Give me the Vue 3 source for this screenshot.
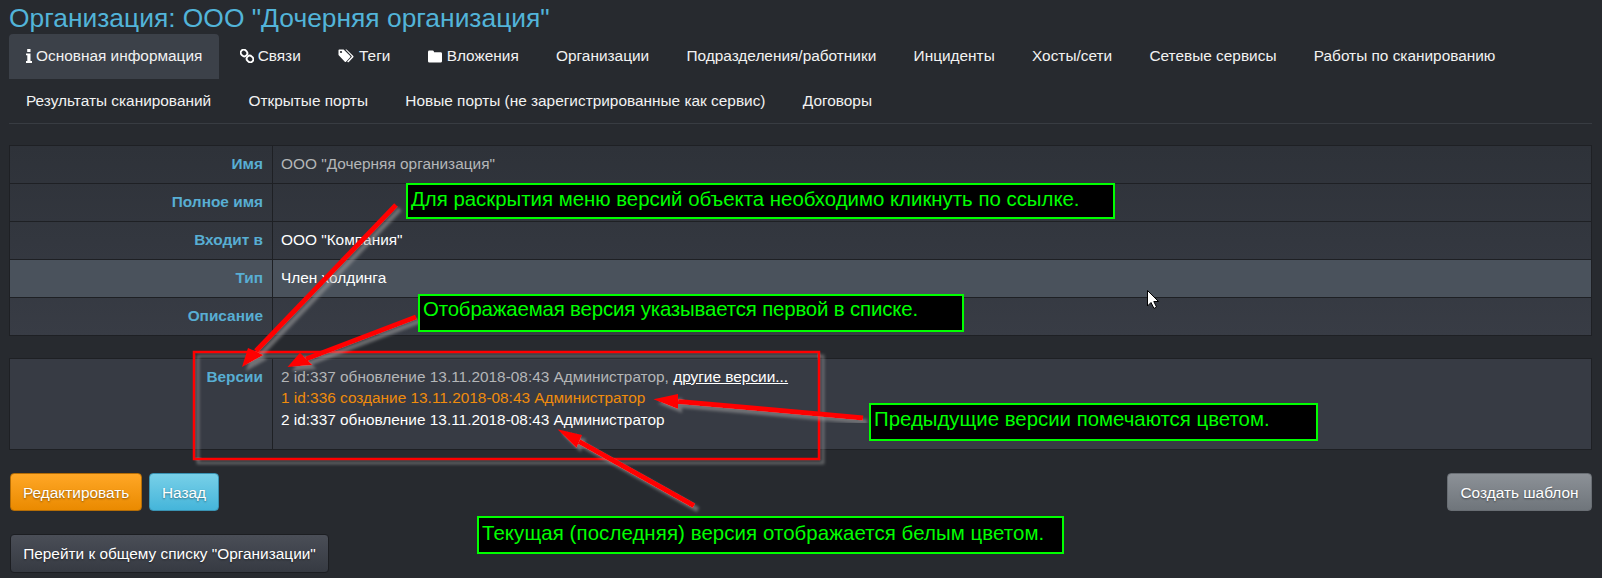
<template>
  <div class="page">
    <h3 class="title">Организация: ООО "Дочерняя организация"</h3>

    <ul class="tabs">
      <li v-for="tab in tabs" :key="tab.name" class="tab" :class="{ active: tab.active }">
        <svg v-if="tab.icon === 'info'" class="icon" width="6" height="14" viewBox="0 0 6 14">
          <path d="M1.2 0h3.3v2.9H1.2zM0 4.4h4.5v7.7H6V14H0v-1.9h1.3V6.3H0z" fill="#fff" />
        </svg>
        <svg v-if="tab.icon === 'link'" class="icon" width="14" height="14" viewBox="0 0 14 14">
          <g fill="none" stroke="#fff" stroke-width="1.9">
            <rect x="0.6" y="1" width="6.8" height="6" rx="3" transform="rotate(45 4 4)" />
            <rect x="6.6" y="7" width="6.8" height="6" rx="3" transform="rotate(45 10 10)" />
          </g>
        </svg>
        <svg v-if="tab.icon === 'tags'" class="icon" width="17" height="14" viewBox="0 0 16 14" preserveAspectRatio="xMinYMid meet">
          <path d="M0.5 1.3Q0.5 0.5 1.3 0.5H5.6L12.2 7.1Q12.8 7.7 12.2 8.3L8 12.7Q7.4 13.2 6.8 12.7L0.5 6Z" fill="#fff" />
          <circle cx="3" cy="3" r="1.1" fill="#272a2f" />
          <path d="M7.4 0.5H8.6L15.3 7.1Q15.8 7.7 15.3 8.3L10.8 13Q10.2 13.5 9.6 13L9.2 12.6L13.6 7.9Q14 7.4 13.6 7Z" fill="#fff" />
        </svg>
        <svg v-if="tab.icon === 'folder'" class="icon" width="15" height="13" viewBox="0 0 14 13" preserveAspectRatio="xMinYMid meet">
          <path d="M1.4 0.5H4.6Q5.6 0.5 5.9 1.4L6.1 2.2H12.6Q14 2.2 14 3.6V11.2Q14 12.6 12.6 12.6H1.4Q0 12.6 0 11.2V1.9Q0 0.5 1.4 0.5Z" fill="#fff" />
        </svg>
        {{ tab.name }}
      </li>
    </ul>

    <div class="panel panel-info">
      <div v-for="row in rows" :key="row.label" class="row" :class="{ hover: row.hover }">
        <div class="label">{{ row.label }}</div>
        <div class="value" :class="{ muted: row.muted }">{{ row.value }}</div>
      </div>
    </div>

    <div class="panel panel-versions">
      <div class="row row-versions">
        <div class="label">Версии</div>
        <div class="value">
          <div class="muted">2 id:337 обновление 13.11.2018-08:43 Администратор, <a class="more">другие версии...</a></div>
          <div class="old">1 id:336 создание 13.11.2018-08:43 Администратор</div>
          <div>2 id:337 обновление 13.11.2018-08:43 Администратор</div>
        </div>
      </div>
    </div>

    <div class="actions">
      <div class="actions-left">
        <button class="btn btn-orange">Редактировать</button>
        <button class="btn btn-blue">Назад</button>
      </div>
      <button class="btn btn-grey">Создать шаблон</button>
    </div>
    <button class="btn btn-dark">Перейти к общему списку "Организации"</button>

    <!-- поверх страницы: красная рамка, стрелки, подписи -->
    <svg class="overlay" width="1602" height="578" viewBox="0 0 1602 578">
      <defs>
        <filter id="shade" x="-10%" y="-10%" width="130%" height="130%">
          <feDropShadow dx="4" dy="4" stdDeviation="1.6" flood-color="#a0a0a0" flood-opacity="0.55" />
        </filter>
      </defs>
      <g filter="url(#shade)">
        <rect x="194" y="352" width="625" height="107" fill="none" stroke="#f00" stroke-width="2.5" />
      </g>
      <g v-for="(a, i) in arrows" :key="i" filter="url(#shade)">
        <line :x1="a.from[0]" :y1="a.from[1]" :x2="a.neck[0]" :y2="a.neck[1]" stroke="#f00" stroke-width="5" />
        <polygon :points="a.head" fill="#f00" />
      </g>
      <path d="M1147.5 290.5V306L1151 302.5L1154 308.5L1156.5 307L1153.8 301.5H1158.5Z" fill="#fff" stroke="#000" stroke-width="1" />
    </svg>

    <div
      v-for="note in notes"
      :key="note.text"
      class="note"
      :style="{ left: note.x + 'px', top: note.y + 'px', width: note.w + 'px', height: note.h + 'px', letterSpacing: note.ls + 'px', paddingTop: note.pad + 'px' }"
    >
      {{ note.text }}
    </div>
  </div>
</template>

<script setup>
const tabs = [
  { name: 'Основная информация', icon: 'info', active: true },
  { name: 'Связи', icon: 'link' },
  { name: 'Теги', icon: 'tags' },
  { name: 'Вложения', icon: 'folder' },
  { name: 'Организации' },
  { name: 'Подразделения/работники' },
  { name: 'Инциденты' },
  { name: 'Хосты/сети' },
  { name: 'Сетевые сервисы' },
  { name: 'Работы по сканированию' },
  { name: 'Результаты сканирований' },
  { name: 'Открытые порты' },
  { name: 'Новые порты (не зарегистрированные как сервис)' },
  { name: 'Договоры' },
];

const rows = [
  { label: 'Имя', value: 'ООО "Дочерняя организация"', muted: true },
  { label: 'Полное имя', value: '' },
  { label: 'Входит в', value: 'ООО "Компания"' },
  { label: 'Тип', value: 'Член холдинга', hover: true },
  { label: 'Описание', value: '' },
];

const arrows = [
  { from: [396, 205], neck: [256, 351], head: '242,367 248,348 263.5,355' },
  { from: [416, 317], neck: [306, 359], head: '287.5,367 300,352.7 312.5,365' },
  { from: [863, 418], neck: [678, 401.5], head: '653.5,399.3 678,394 678,409' },
  { from: [694, 505.7], neck: [579, 441.5], head: '557.5,429.3 582,435 576.5,448' },
];

// ширина текста в подписях чуть разная, подгонка через letter-spacing
const notes = [
  { text: 'Для раскрытия меню версий объекта необходимо кликнуть по ссылке.', x: 406, y: 183, w: 709, h: 36, ls: 0, pad: 1 },
  { text: 'Отображаемая версия указывается первой в списке.', x: 418, y: 294, w: 546, h: 38, ls: -0.15, pad: 0 },
  { text: 'Предыдущие версии помечаются цветом.', x: 869, y: 403, w: 449, h: 38, ls: 0, pad: 1 },
  { text: 'Текущая (последняя) версия отображается белым цветом.', x: 477, y: 516, w: 587, h: 38, ls: 0.1, pad: 2 },
];
</script>

<style>
body {
  background: #272a2f;
}
</style>

<style scoped>
.page {
  position: relative;
  box-sizing: border-box;
  width: 1602px;
  height: 578px;
  padding: 0 10px 0 9px;
  overflow: hidden;
  background: #272a2f;
  font-family: 'Liberation Sans', Arial, sans-serif;
  font-size: 15.4px;
  color: #fff;
}

.title {
  margin: 0;
  height: 34px;
  line-height: 36px;
  font-size: 26.4px;
  font-weight: 400;
  color: #52b4d9;
}

.tabs {
  display: flex;
  flex-wrap: wrap;
  margin: 0;
  padding: 0;
  list-style: none;
  border-bottom: 1px solid #383c42;
}

.tab {
  display: flex;
  align-items: center;
  gap: 4px;
  height: 44.5px;
  padding: 0 17px;
  margin-right: 3.3px;
  white-space: nowrap;
  color: #f2f2f2;
}

.tab.active {
  background: #3c4149;
  border-radius: 4px 4px 0 0;
}

.panel {
  border: 1px solid #1e2024;
  border-bottom: 0;
}

.panel-info {
  margin-top: 21px;
  background: linear-gradient(#2e3239, #383c45);
}

.panel-versions {
  margin-top: 22px;
  background: #373b44;
}

.row {
  display: flex;
  height: 38px;
  box-sizing: border-box;
  border-bottom: 1px solid #1e2024;
}

.row.hover {
  background: #4a525c;
}

.row-versions {
  height: 91px;
}

.label {
  box-sizing: border-box;
  width: 263px;
  padding: 0 9px 0 10px;
  line-height: 36px;
  text-align: right;
  font-weight: 700;
  color: #58aed3;
  border-right: 1px solid #1e2024;
}

.value {
  flex: 1;
  padding: 0 8px;
  line-height: 36px;
}

.row-versions .value {
  padding-top: 7px;
  line-height: 21.4px;
}

.row-versions .label {
  padding-top: 7px;
  line-height: 21.4px;
}

.muted {
  color: #b4b6b8;
}

.old {
  color: #f08c0c;
}

.more {
  color: #fff;
  text-decoration: underline;
}

.actions {
  display: flex;
  justify-content: space-between;
  margin-top: 23px;
}

.actions-left {
  display: flex;
  gap: 7px;
  margin-left: 1px;
}

.btn {
  box-sizing: border-box;
  height: 38px;
  padding: 1px 12px 0;
  font-family: inherit;
  font-size: 15.4px;
  white-space: nowrap;
  color: #fff;
  border: 1px solid transparent;
  border-radius: 4px;
  text-shadow: 0 1px 2px rgba(0, 0, 0, 0.45);
}

.btn-orange {
  width: 132px;
  background: linear-gradient(#ffa726, #ea8a00);
  border-color: #b56d06;
}

.btn-blue {
  width: 70px;
  background: linear-gradient(#78d0e8, #45b5da);
  border-color: #3a93b3;
}

.btn-grey {
  width: 145px;
  background: linear-gradient(#8c9197, #6f757b);
  border-color: #696e74;
}

.btn-dark {
  display: block;
  width: 319px;
  height: 39px;
  margin: 23px 0 0 1px;
  padding-top: 0;
  background: linear-gradient(#4a4e57, #363a42);
  border-color: #1c1e22;
}

.overlay {
  position: absolute;
  top: 0;
  left: 0;
  pointer-events: none;
}

.note {
  position: absolute;
  box-sizing: border-box;
  padding-left: 3px;
  background: #000;
  border: 2px solid #0f0;
  color: #0f0;
  font-size: 20.4px;
  line-height: 26px;
  white-space: nowrap;
}
</style>
